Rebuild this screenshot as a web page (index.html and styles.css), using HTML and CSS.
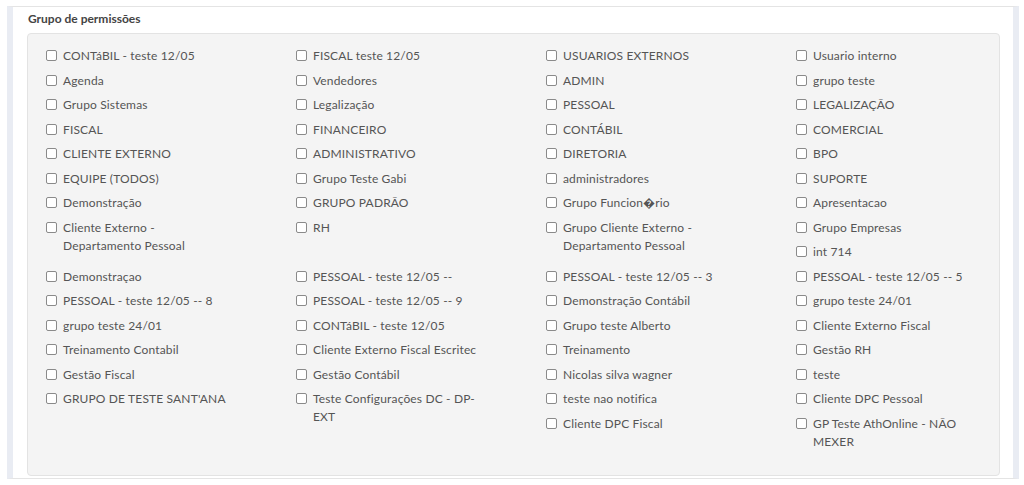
FILE: index.html
```html
<!DOCTYPE html>
<html lang="pt-BR">
<head>
    <meta charset="UTF-8">
    <meta name="viewport" content="width=device-width, initial-scale=1.0">
    <title>Grupo de permissões</title>
    <link rel="stylesheet" href="styles.css">
</head>
<body>

    <div class="page">
        <section class="panel">
            <div class="panel-title">Grupo de permissões</div>

            <!-- Permission groups list -->
            <div class="perm-box">
                <ul class="perm-grid">
                    <li class="perm"><label><input type="checkbox"><span>CONTáBIL - teste 12/05</span></label></li>
                    <li class="perm"><label><input type="checkbox"><span>FISCAL teste 12/05</span></label></li>
                    <li class="perm"><label><input type="checkbox"><span>USUARIOS EXTERNOS</span></label></li>
                    <li class="perm"><label><input type="checkbox"><span>Usuario interno</span></label></li>

                    <li class="perm"><label><input type="checkbox"><span>Agenda</span></label></li>
                    <li class="perm"><label><input type="checkbox"><span>Vendedores</span></label></li>
                    <li class="perm"><label><input type="checkbox"><span>ADMIN</span></label></li>
                    <li class="perm"><label><input type="checkbox"><span>grupo teste</span></label></li>

                    <li class="perm"><label><input type="checkbox"><span>Grupo Sistemas</span></label></li>
                    <li class="perm"><label><input type="checkbox"><span>Legalização</span></label></li>
                    <li class="perm"><label><input type="checkbox"><span>PESSOAL</span></label></li>
                    <li class="perm"><label><input type="checkbox"><span>LEGALIZAÇÃO</span></label></li>

                    <li class="perm"><label><input type="checkbox"><span>FISCAL</span></label></li>
                    <li class="perm"><label><input type="checkbox"><span>FINANCEIRO</span></label></li>
                    <li class="perm"><label><input type="checkbox"><span>CONTÁBIL</span></label></li>
                    <li class="perm"><label><input type="checkbox"><span>COMERCIAL</span></label></li>

                    <li class="perm"><label><input type="checkbox"><span>CLIENTE EXTERNO</span></label></li>
                    <li class="perm"><label><input type="checkbox"><span>ADMINISTRATIVO</span></label></li>
                    <li class="perm"><label><input type="checkbox"><span>DIRETORIA</span></label></li>
                    <li class="perm"><label><input type="checkbox"><span>BPO</span></label></li>

                    <li class="perm"><label><input type="checkbox"><span>EQUIPE (TODOS)</span></label></li>
                    <li class="perm"><label><input type="checkbox"><span>Grupo Teste Gabi</span></label></li>
                    <li class="perm"><label><input type="checkbox"><span>administradores</span></label></li>
                    <li class="perm"><label><input type="checkbox"><span>SUPORTE</span></label></li>

                    <li class="perm"><label><input type="checkbox"><span>Demonstração</span></label></li>
                    <li class="perm"><label><input type="checkbox"><span>GRUPO PADRÃO</span></label></li>
                    <li class="perm"><label><input type="checkbox"><span>Grupo Funcion&#xFFFD;rio</span></label></li>
                    <li class="perm"><label><input type="checkbox"><span>Apresentacao</span></label></li>

                    <li class="perm tall"><label><input type="checkbox"><span>Cliente Externo - Departamento Pessoal</span></label></li>
                    <li class="perm"><label><input type="checkbox"><span>RH</span></label></li>
                    <li class="perm tall"><label><input type="checkbox"><span>Grupo Cliente Externo - Departamento Pessoal</span></label></li>
                    <li class="perm"><label><input type="checkbox"><span>Grupo Empresas</span></label></li>
                    <li class="perm last-col"><label><input type="checkbox"><span>int 714</span></label></li>

                    <li class="perm"><label><input type="checkbox"><span>Demonstraçao</span></label></li>
                    <li class="perm"><label><input type="checkbox"><span>PESSOAL - teste 12/05 --</span></label></li>
                    <li class="perm"><label><input type="checkbox"><span>PESSOAL - teste 12/05 -- 3</span></label></li>
                    <li class="perm"><label><input type="checkbox"><span>PESSOAL - teste 12/05 -- 5</span></label></li>

                    <li class="perm"><label><input type="checkbox"><span>PESSOAL - teste 12/05 -- 8</span></label></li>
                    <li class="perm"><label><input type="checkbox"><span>PESSOAL - teste 12/05 -- 9</span></label></li>
                    <li class="perm"><label><input type="checkbox"><span>Demonstração Contábil</span></label></li>
                    <li class="perm"><label><input type="checkbox"><span>grupo teste 24/01</span></label></li>

                    <li class="perm"><label><input type="checkbox"><span>grupo teste 24/01</span></label></li>
                    <li class="perm"><label><input type="checkbox"><span>CONTáBIL - teste 12/05</span></label></li>
                    <li class="perm"><label><input type="checkbox"><span>Grupo teste Alberto</span></label></li>
                    <li class="perm"><label><input type="checkbox"><span>Cliente Externo Fiscal</span></label></li>

                    <li class="perm"><label><input type="checkbox"><span>Treinamento Contabil</span></label></li>
                    <li class="perm"><label><input type="checkbox"><span>Cliente Externo Fiscal Escritec</span></label></li>
                    <li class="perm"><label><input type="checkbox"><span>Treinamento</span></label></li>
                    <li class="perm"><label><input type="checkbox"><span>Gestão RH</span></label></li>

                    <li class="perm"><label><input type="checkbox"><span>Gestão Fiscal</span></label></li>
                    <li class="perm"><label><input type="checkbox"><span>Gestão Contábil</span></label></li>
                    <li class="perm"><label><input type="checkbox"><span>Nicolas silva wagner</span></label></li>
                    <li class="perm"><label><input type="checkbox"><span>teste</span></label></li>

                    <li class="perm"><label><input type="checkbox"><span>GRUPO DE TESTE SANT'ANA</span></label></li>
                    <li class="perm tall"><label><input type="checkbox"><span>Teste Configurações DC - DP-EXT</span></label></li>
                    <li class="perm"><label><input type="checkbox"><span>teste nao notifica</span></label></li>
                    <li class="perm"><label><input type="checkbox"><span>Cliente DPC Pessoal</span></label></li>

                    <li class="perm third-col"><label><input type="checkbox"><span>Cliente DPC Fiscal</span></label></li>
                    <li class="perm"><label><input type="checkbox"><span>GP Teste AthOnline - NÃO MEXER</span></label></li>
                </ul>
            </div>
        </section>
    </div>

</body>
</html>
```

FILE: styles.css
```css
body {
    margin: 0;
    background-color: #fff;
    font-family: Lato, "Open Sans", Arial, sans-serif;
    color: #555;
}

.page {
    padding: 6px 5px 7px 7px;
}

.panel {
    background-color: #fff;
    border-top: 1px solid #e4e4e4;
    border-bottom: 1px solid #e4e4e4;
    border-left: 6px solid #e9ecf3;
    border-right: 6px solid #e9ecf3;
    padding: 5px 13px 2px 14px;
}

.panel-title {
    font-size: 12px;
    font-weight: bold;
    line-height: 14px;
    color: #444;
    padding-left: 1px;
    margin-bottom: 7px;
}

.perm-box {
    background-color: #f4f4f4;
    border: 1px solid #e3e3e3;
    border-radius: 4px;
    padding: 13px 0 24px 18px;
    overflow: hidden;
}

.perm-grid {
    list-style: none;
    margin: 0;
    padding: 0;
    display: grid;
    grid-template-columns: repeat(4, 250px);
    grid-auto-rows: minmax(24.5px, auto);
}

.perm {
    font-size: 12px;
    line-height: 18px;
    letter-spacing: 0.15px;
}

.perm.tall {
    grid-row: span 2;
}

.perm.last-col {
    grid-column: 4;
}

.perm.third-col {
    grid-column: 3;
}

.perm label {
    display: flex;
    align-items: flex-start;
    gap: 6px;
    cursor: pointer;
}

.perm span {
    max-width: 168px;
}

.perm input[type="checkbox"] {
    appearance: none;
    -webkit-appearance: none;
    flex: none;
    width: 11px;
    height: 11px;
    margin: 3px 0 0 0;
    border: 1px solid #8a8a8a;
    border-radius: 2px;
    background-color: #fff;
}

.perm input[type="checkbox"]:checked {
    background-color: #3c8dbc;
    border-color: #3c8dbc;
}
```
